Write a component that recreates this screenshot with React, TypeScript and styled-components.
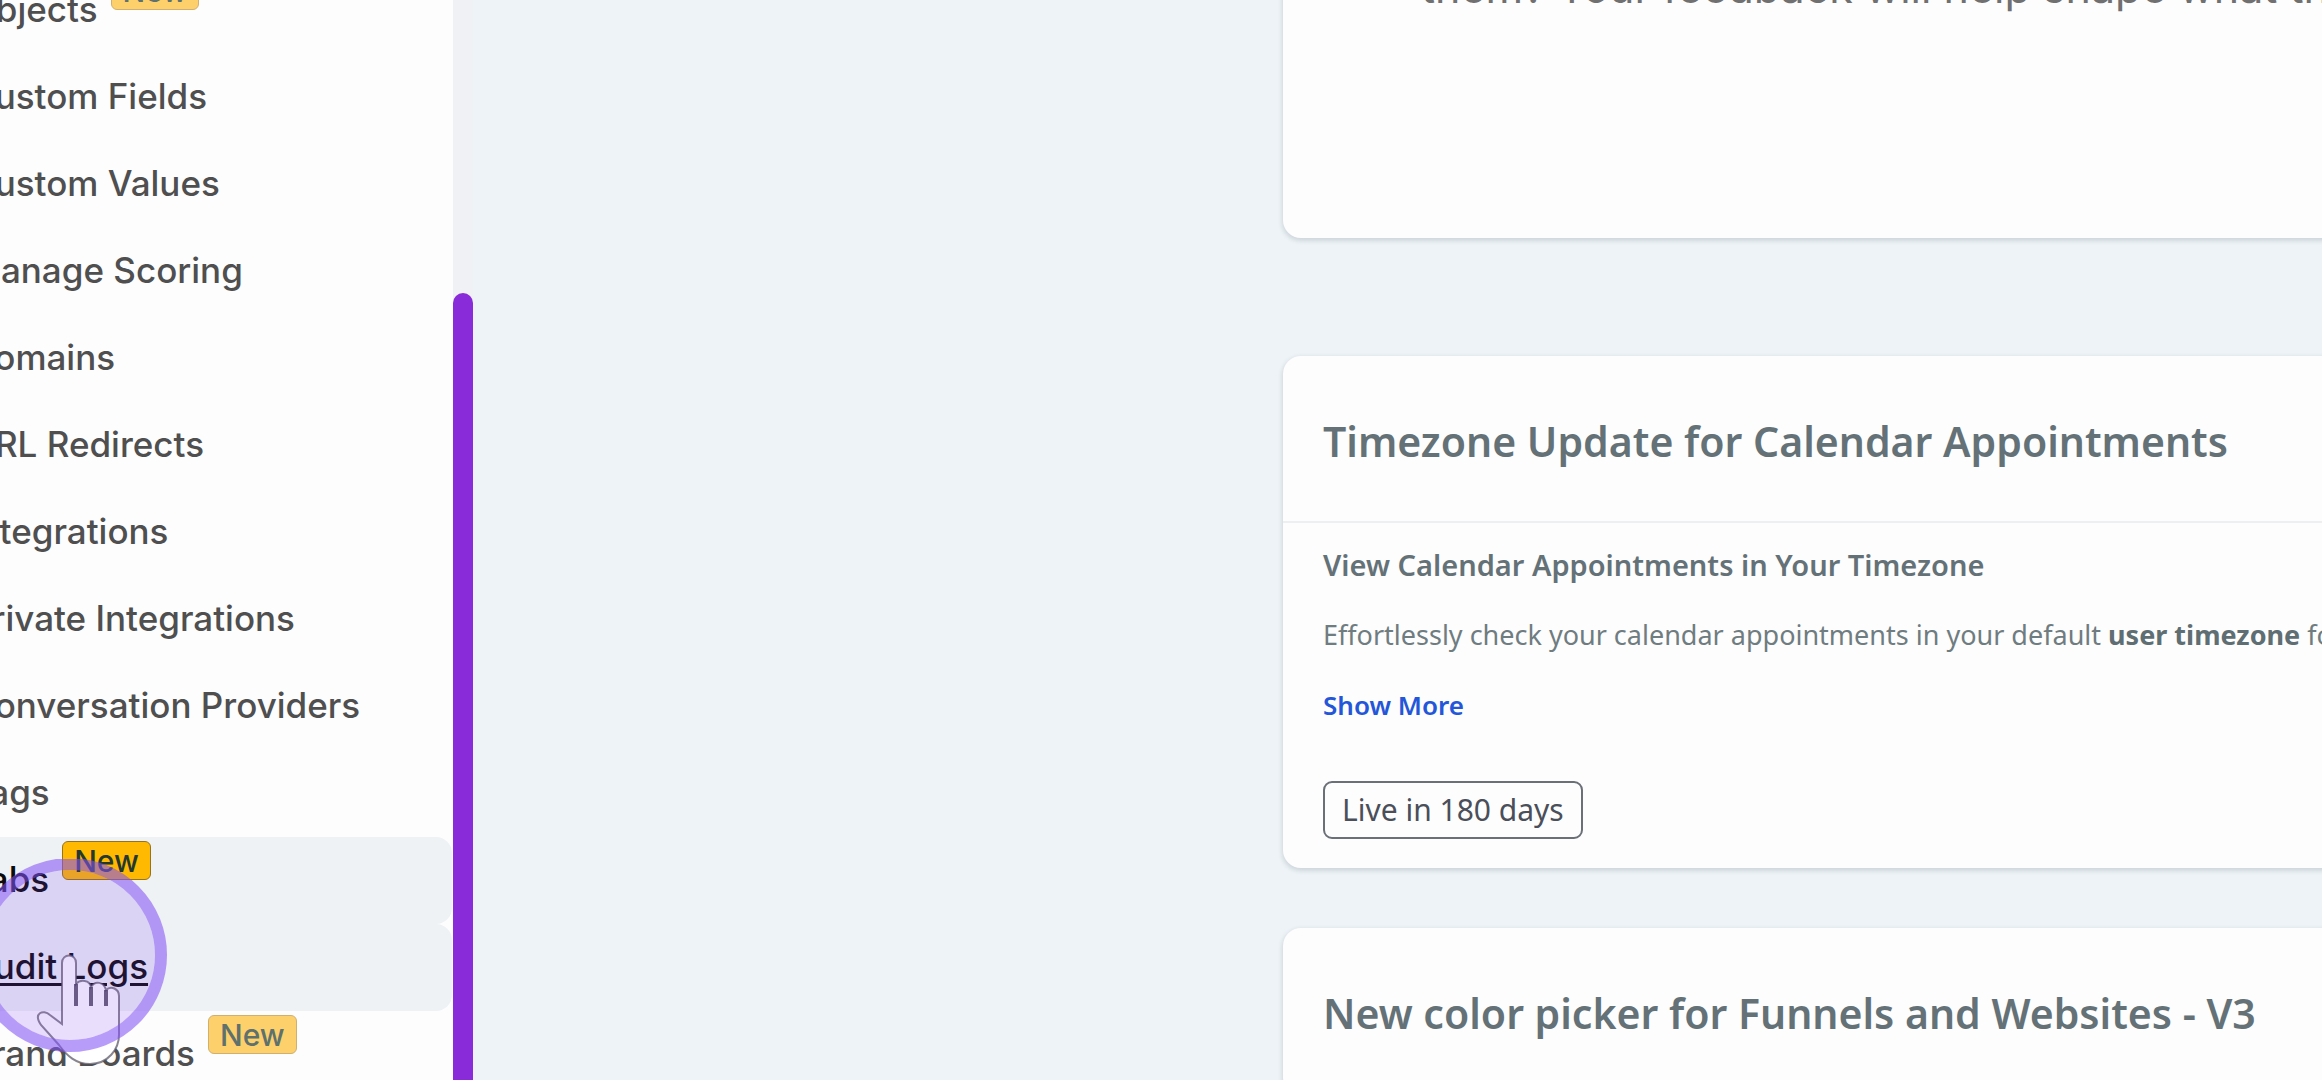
import React from "react";
import styled, { createGlobalStyle, css } from "styled-components";

const Global = createGlobalStyle`
  * { box-sizing: border-box; }
  body {
    margin: 0;
    background: #edf3f7;
    overflow: hidden;
    font-family: "Noto Sans", "Open Sans", sans-serif;
  }
  h2, h3, p, ul { margin: 0; padding: 0; }
`;

const Page = styled.div`
  display: flex;
  height: 100vh;
  overflow: hidden;
`;

const Sidebar = styled.aside`
  position: relative;
  display: flex;
  flex: none;
  width: 473px;
  overflow: hidden;
  font-family: Inter, sans-serif;
`;

const Menu = styled.ul`
  flex: 1;
  margin-top: -33px;
  list-style: none;
  background: #fdfdfe;
`;

const MenuItem = styled.li<{ $active?: boolean }>`
  display: flex;
  height: 87px;
  margin-right: 1px;
  border-radius: 0 16px 16px 0;
  background: ${(p) => (p.$active ? "#eef2f5" : "transparent")};
`;

const MenuLink = styled.a<{ $active?: boolean; $underline?: boolean }>`
  display: flex;
  align-items: center;
  gap: 13px;
  margin-left: -31px;
  padding-bottom: 4px;
  font-size: 35px;
  line-height: 48px;
  font-weight: 500;
  white-space: nowrap;
  color: ${(p) => (p.$active ? "#0b0b0d" : "#4f4f50")};
  text-decoration: ${(p) => (p.$underline ? "underline" : "none")};
  text-decoration-thickness: 3px;
  text-underline-offset: 4px;
`;

const Badge = styled.span<{ $solid?: boolean }>`
  align-self: flex-start;
  display: flex;
  align-items: center;
  height: 39px;
  margin-top: 4px;
  padding: 0 11px;
  border: 1px solid;
  border-radius: 6px;
  font-size: 30px;
  line-height: 36px;
  font-weight: 500;
  ${(p) =>
    p.$solid
      ? css`
          background: #ffb900;
          border-color: #96731f;
          color: #24382f;
        `
      : css`
          background: #fdd06b;
          border-color: #cfb071;
          color: #5e716c;
        `}
`;

const Track = styled.div`
  display: flex;
  flex: none;
  width: 20px;
  padding-top: 293px;
  background: #f0f1f5;
`;

const Thumb = styled.div`
  flex: 1;
  border-radius: 10px 10px 0 0;
  background: #892bd9;
`;

const Pointer = styled.svg`
  position: absolute;
  left: -28px;
  top: 859px;
  width: 196px;
  height: 221px;
  pointer-events: none;
`;

const Main = styled.main`
  display: flex;
  flex: 1;
  flex-direction: column;
  gap: 60px;
  min-width: 0;
  margin-right: -40px;
  padding-left: 810px;
`;

const Card = styled.section`
  flex: none;
  border-radius: 18px;
  background: #fdfdfe;
  box-shadow: 0 2px 4px 1px rgba(60, 80, 90, 0.17);
`;

const Intro = styled(Card)`
  height: 275px;
  margin: -37px 0 58px;
  padding: 0 138px;
  overflow: hidden;
  white-space: nowrap;
  font-family: Inter, sans-serif;
  font-size: 43px;
  line-height: 48px;
  color: #707070;
`;

const CardHead = styled.header`
  display: flex;
  align-items: center;
  height: 167px;
  padding: 4px 40px 0;
  border-bottom: 2px solid #edf0f2;
`;

const Title = styled.h2`
  font-size: 41px;
  line-height: 56px;
  font-weight: 600;
  white-space: nowrap;
  color: #647277;
`;

const CardBody = styled.div`
  display: flex;
  flex-direction: column;
  align-items: flex-start;
  padding: 22px 40px 29px;
`;

const Subtitle = styled.h3`
  font-size: 29px;
  line-height: 40px;
  font-weight: 600;
  color: #647277;
`;

const Copy = styled.p`
  margin: 30px 0;
  font-size: 27px;
  line-height: 40px;
  white-space: nowrap;
  color: #6f7c80;

  strong { color: #5f6e72; }
`;

const ShowMore = styled.button`
  padding: 0;
  border: 0;
  background: none;
  font: 600 26px/40px "Noto Sans", "Open Sans", sans-serif;
  color: #2356d8;
`;

const Tag = styled.span`
  margin-top: 56px;
  padding: 7px 17px;
  border: 2px solid #6b7078;
  border-radius: 9px;
  font-size: 30px;
  line-height: 40px;
  color: #4a4f5a;
`;

const items = [
  { label: "Objects", badge: true },
  { label: "Custom Fields" },
  { label: "Custom Values" },
  { label: "Manage Scoring" },
  { label: "Domains" },
  { label: "URL Redirects" },
  { label: "Integrations" },
  { label: "Private Integrations" },
  { label: "Conversation Providers" },
  { label: "Tags" },
  { label: "Labs", badge: true, active: true },
  { label: "Audit Logs", active: true, underline: true },
  { label: "Brand Boards", badge: true },
];

export default function App() {
  return (
    <Page>
      <Global />
      <Sidebar>
        <Menu>
          {items.map((it) => (
            <MenuItem key={it.label} $active={it.active}>
              <MenuLink href="#" $active={it.active} $underline={it.underline}>
                {it.label}
                {it.badge && <Badge $solid={it.active}>New</Badge>}
              </MenuLink>
            </MenuItem>
          ))}
        </Menu>
        <Track>
          <Thumb />
        </Track>
        <Pointer viewBox="-28 859 196 221" aria-hidden="true">
          <path
            d="M62 1024 V963 C62 953 76 953 76 963 V984 C80 979 90 980 91 987 C95 980 104 982 106 990 C111 985 119 989 119 996 V1032 C120 1050 107 1064 90 1064 C76 1064 67 1056 59 1045 L41 1025 C33 1013 43 1009 50 1015 L62 1024 Z"
            fill="#fff"
            stroke="#55515f"
            strokeOpacity="0.7"
            strokeWidth="2"
          />
          <path d="M76 984 V1006 M91 987 V1006 M106 990 V1006" stroke="#3e3a50" strokeOpacity="0.8" strokeWidth="4" />
          <circle cx="70" cy="955" r="85" fill="#7c3aed" fillOpacity="0.17" />
          <circle cx="70" cy="955" r="91" fill="none" stroke="#8351f5" strokeOpacity="0.57" strokeWidth="12" />
        </Pointer>
      </Sidebar>
      <Main>
        <Intro>
          <p>them? Your feedback will help shape what they</p>
        </Intro>
        <Card>
          <CardHead>
            <Title>Timezone Update for Calendar Appointments</Title>
          </CardHead>
          <CardBody>
            <Subtitle>View Calendar Appointments in Your Timezone</Subtitle>
            <Copy>
              Effortlessly check your calendar appointments in your default <strong>user timezone</strong> for
            </Copy>
            <ShowMore type="button">Show More</ShowMore>
            <Tag>Live in 180 days</Tag>
          </CardBody>
        </Card>
        <Card>
          <CardHead>
            <Title>New color picker for Funnels and Websites - V3</Title>
          </CardHead>
        </Card>
      </Main>
    </Page>
  );
}
